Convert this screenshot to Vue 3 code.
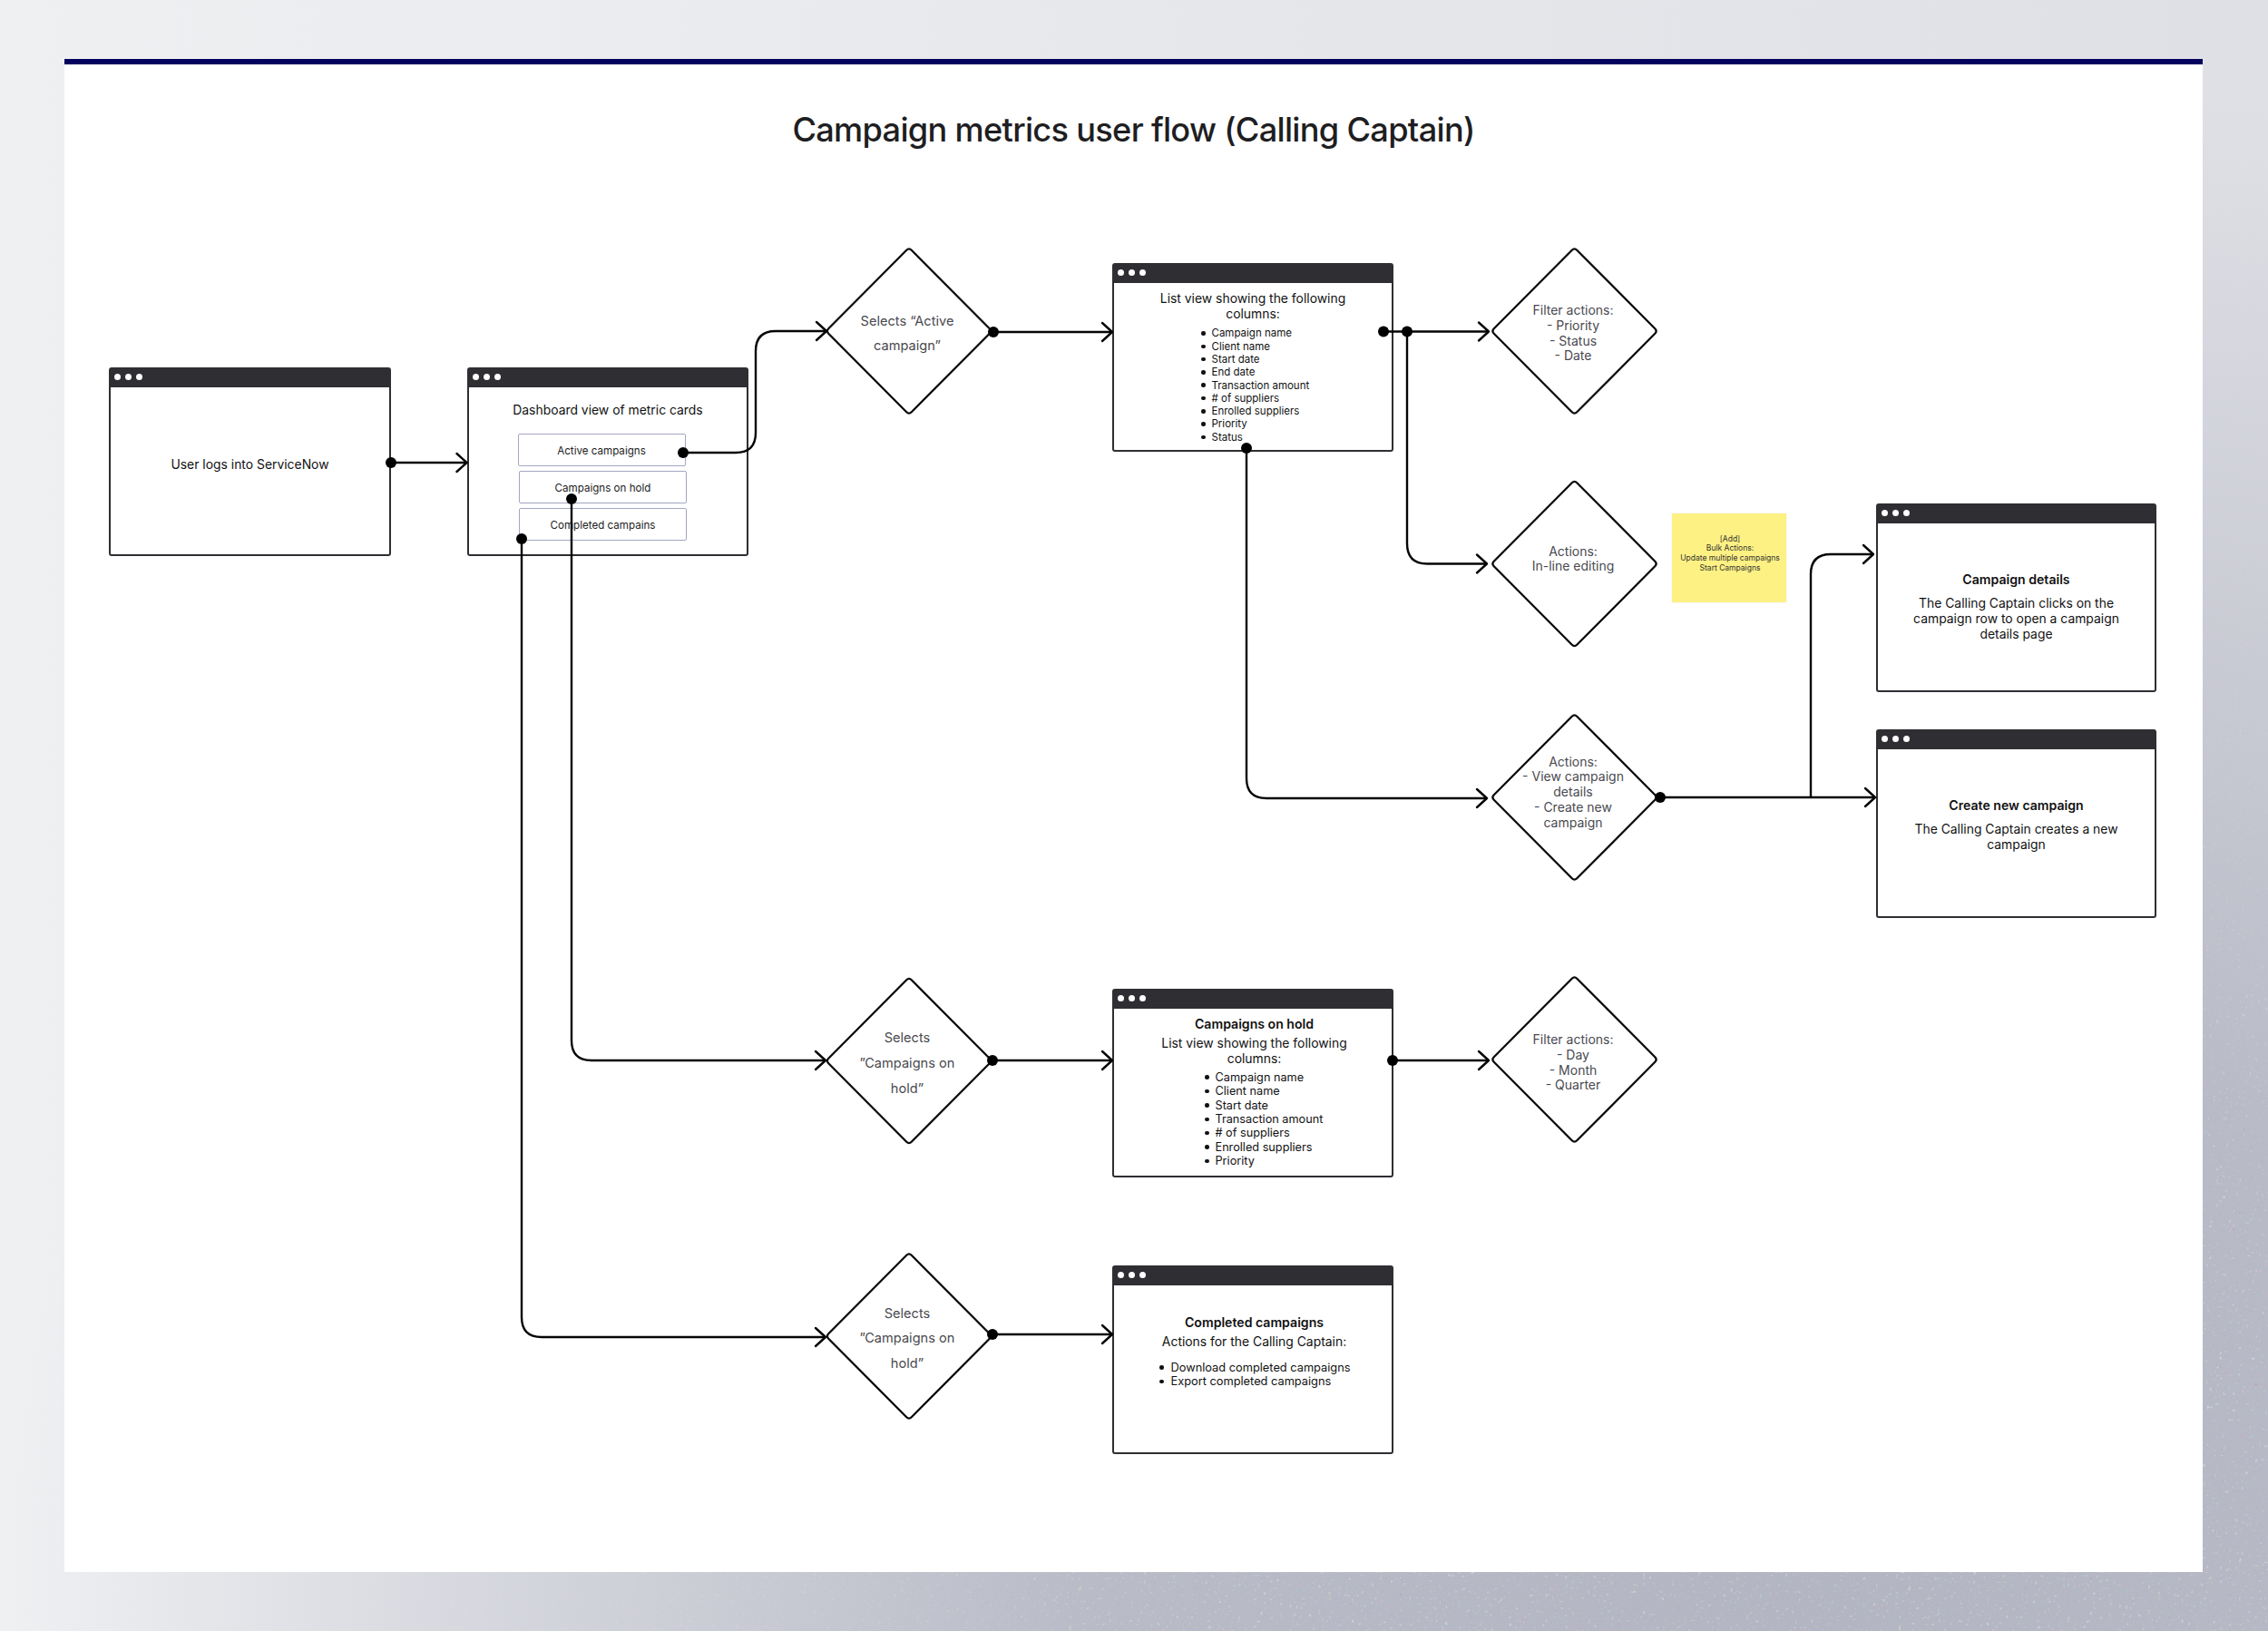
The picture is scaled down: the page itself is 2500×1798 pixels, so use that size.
<script setup>
const OX = 71
const OY = 65

const dots = [[431,510],[753,499],[630,550],[575,594],[1095,366],[1525,365.5],[1551,365.5],[1374,494],[1830,879],[1094,1169],[1535,1169],[1094,1471]]

const lines = [
  { d: 'M431 510H514', tip: [514.5,510] },
  { d: 'M753 499H811Q833 499 833 477V387Q833 365 855 365H911', tip: [911,365] },
  { d: 'M1094 366H1226', tip: [1226,366] },
  { d: 'M1525 365.5H1641', tip: [1641,365.5] },
  { d: 'M1551 365.5V599Q1551 621.5 1573 621.5H1639', tip: [1639,621.5] },
  { d: 'M1374 494V858Q1374 880 1396 880H1639', tip: [1639,880] },
  { d: 'M1830 879H2067', tip: [2067,879] },
  { d: 'M1996 879V633Q1996 611 2018 611H2065', tip: [2065,611] },
  { d: 'M630 550V1147Q630 1169 652 1169H910', tip: [910,1169] },
  { d: 'M575 594V1452Q575 1474 597 1474H910', tip: [910,1474] },
  { d: 'M1094 1169H1226', tip: [1226,1169] },
  { d: 'M1535 1169H1641', tip: [1641,1169] },
  { d: 'M1094 1471H1226', tip: [1226,1471] },
]

function diamondPath(cx, cy, hw, hh) {
  const r = 0.03
  const pts = [[cx,cy-hh],[cx+hw,cy],[cx,cy+hh],[cx-hw,cy]]
  let d = ''
  pts.forEach((p, i) => {
    const prev = pts[(i + 3) % 4]
    const next = pts[(i + 1) % 4]
    const a = [p[0] + (prev[0]-p[0])*r, p[1] + (prev[1]-p[1])*r]
    const b = [p[0] + (next[0]-p[0])*r, p[1] + (next[1]-p[1])*r]
    d += `${i ? 'L' : 'M'}${a[0]} ${a[1]}Q${p[0]} ${p[1]} ${b[0]} ${b[1]}`
  })
  return d + 'Z'
}

const diamonds = [
  { cx:1002, cy:365, lines:['Selects “Active','campaign”'], tx:1000, ty:354, lh:27.7, wide:true },
  { cx:1735.5, cy:365, lines:['Filter actions:','- Priority','- Status','- Date'], tx:1734, ty:342, lh:16.7 },
  { cx:1735.5, cy:621.5, lines:['Actions:','In-line editing'], tx:1734, ty:607.5, lh:16.9 },
  { cx:1735.5, cy:879, lines:['Actions:','- View campaign','details','- Create new','campaign'], tx:1734, ty:839.6, lh:16.8 },
  { cx:1002, cy:1169.5, lines:['Selects','”Campaigns on','hold”'], tx:1000, ty:1144.4, lh:27.9, wide:true },
  { cx:1735.5, cy:1168, lines:['Filter actions:','- Day','- Month','- Quarter'], tx:1734, ty:1146, lh:16.7 },
  { cx:1002, cy:1473, lines:['Selects','”Campaigns on','hold”'], tx:1000, ty:1448, lh:27.9, wide:true },
]

const pageW = 2500
const pageH = 1798

function winStyle(x, y, w, h) {
  return { left: `${x-OX}px`, top: `${y-OY}px`, width: `${w}px`, height: `${h}px` }
}
function labelStyle(d) {
  return { left: `${d.tx-OX-100}px`, top: `${d.ty-OY-d.lh/2}px`, lineHeight: `${d.lh}px` }
}
</script>

<template>
  <div class="page">
    <svg class="grain" width="2500" height="1798">
      <filter id="speckle" x="0" y="0" width="100%" height="100%">
        <feTurbulence type="fractalNoise" baseFrequency="0.28" numOctaves="2" seed="7" />
        <feColorMatrix type="matrix" values="4 0 0 0 -1.5  0 4 0 0 -1.5  0 0 4 0 -1.5  1.8 1.8 1.8 0 -3.0" />
      </filter>
      <rect width="2500" height="1798" filter="url(#speckle)" />
    </svg>

    <main class="card">
      <h1 class="title">Campaign metrics user flow (Calling Captain)</h1>

      <section class="win" :style="winStyle(120,405,311,208)">
        <div class="bar"><i></i><i></i><i></i></div>
        <div class="body b1"><p class="t">User logs into ServiceNow</p></div>
      </section>

      <section class="win" :style="winStyle(515,405,310,208)">
        <div class="bar"><i></i><i></i><i></i></div>
        <div class="body b2">
          <p class="t">Dashboard view of metric cards</p>
          <div class="btns">
            <div class="btn first">Active campaigns</div>
            <div class="btn">Campaigns on hold</div>
            <div class="btn">Completed campains</div>
          </div>
        </div>
      </section>

      <section class="win" :style="winStyle(1226,290,310,208)">
        <div class="bar"><i></i><i></i><i></i></div>
        <div class="body b3">
          <p class="t">List view showing the following<br>columns:</p>
          <ul class="list l3">
            <li>Campaign name</li><li>Client name</li><li>Start date</li><li>End date</li><li>Transaction amount</li><li># of suppliers</li><li>Enrolled suppliers</li><li>Priority</li><li>Status</li>
          </ul>
        </div>
      </section>

      <section class="win" :style="winStyle(2068,555,309,208)">
        <div class="bar"><i></i><i></i><i></i></div>
        <div class="body b5">
          <p class="t strong">Campaign details</p>
          <p class="t para">The Calling Captain clicks on the<br>campaign row to open a campaign<br>details page</p>
        </div>
      </section>

      <section class="win" :style="winStyle(2068,804,309,208)">
        <div class="bar"><i></i><i></i><i></i></div>
        <div class="body b5">
          <p class="t strong">Create new campaign</p>
          <p class="t para">The Calling Captain creates a new<br>campaign</p>
        </div>
      </section>

      <section class="win" :style="winStyle(1226,1090,310,208)">
        <div class="bar"><i></i><i></i><i></i></div>
        <div class="body b7">
          <p class="t strong">Campaigns on hold</p>
          <p class="t sub">List view showing the following<br>columns:</p>
          <ul class="list l7">
            <li>Campaign name</li><li>Client name</li><li>Start date</li><li>Transaction amount</li><li># of suppliers</li><li>Enrolled suppliers</li><li>Priority</li>
          </ul>
        </div>
      </section>

      <section class="win" :style="winStyle(1226,1395,310,208)">
        <div class="bar"><i></i><i></i><i></i></div>
        <div class="body b8">
          <p class="t strong">Completed campaigns</p>
          <p class="t sub">Actions for the Calling Captain:</p>
          <ul class="list l8">
            <li>Download completed campaigns</li><li>Export completed campaigns</li>
          </ul>
        </div>
      </section>

      <aside class="sticky" :style="winStyle(1843,566,126,98)">
        [Add]<br>Bulk Actions:<br>Update multiple campaigns<br>Start Campaigns
      </aside>

      <svg class="wires" :viewBox="`${OX} ${OY} ${pageW-2*OX} ${pageH}`" :width="pageW-2*OX" :height="pageH" fill="none">
        <path v-for="(d,i) in diamonds" :key="'d'+i" :d="diamondPath(d.cx,d.cy,91.5,92)" fill="#fff" stroke="#0b0b0e" stroke-width="2.3" stroke-linejoin="round" />
        <g v-for="(l,i) in lines" :key="'l'+i" stroke="#050507" stroke-width="2.4">
          <path :d="l.d" />
          <path :d="`M${l.tip[0]-11} ${l.tip[1]-10}L${l.tip[0]} ${l.tip[1]}L${l.tip[0]-11} ${l.tip[1]+10}`" stroke-linecap="round" stroke-linejoin="round" />
        </g>
        <circle v-for="(p,i) in dots" :key="'c'+i" :cx="p[0]" :cy="p[1]" r="6" fill="#000" />
      </svg>

      <template v-for="(d,i) in diamonds" :key="'t'+i">
        <div class="dlabel" :class="{ wide: d.wide }" :style="labelStyle(d)">
          <div v-for="(s,j) in d.lines" :key="j">{{ s }}</div>
        </div>
      </template>
    </main>
  </div>
</template>

<style>
html, body { margin: 0; padding: 0; }
</style>

<style scoped>
.page {
  position: relative;
  width: 2500px;
  height: 1798px;
  box-sizing: border-box;
  padding: 64.5px 72px 65px 71px;
  font-family: Inter, "Liberation Sans", sans-serif;
  background:
    radial-gradient(ellipse 1900px 1650px at 2000px 1798px,
      rgb(179,181,194) 0%,
      rgba(180,182,195,.9) 42%,
      rgba(180,182,195,.47) 72%,
      rgba(180,182,195,.2) 90%,
      rgba(180,182,195,0) 105%),
    linear-gradient(to right, #eff0f2, #dfe0e5);
  overflow: hidden;
}
.grain {
  position: absolute;
  left: 0;
  top: 0;
  opacity: .4;
  -webkit-mask-image: radial-gradient(ellipse 1900px 1500px at 2000px 1798px, #000 30%, transparent 90%);
  mask-image: radial-gradient(ellipse 1900px 1500px at 2000px 1798px, #000 30%, transparent 90%);
}
.card {
  position: relative;
  height: 1668px;
  background: #fff;
  border-top: 6px solid #03035f;
  box-sizing: border-box;
}
.title {
  margin: 0;
  padding-top: 50px;
  text-align: center;
  font-size: 36.2px;
  font-weight: 550;
  line-height: 44px;
  color: #1e1e22;
  letter-spacing: -0.7px;
}
.win {
  position: absolute;
  box-sizing: border-box;
  border: 2px solid #2e2e33;
  border-radius: 3px;
  background: #fff;
  display: flex;
  flex-direction: column;
  margin-top: -6px;
}
.bar {
  flex: none;
  box-sizing: border-box;
  height: 20px;
  background: #2e2e33;
  display: flex;
  align-items: center;
  gap: 5px;
  padding: 0 0 2px 4px;
}
.bar i {
  width: 7px;
  height: 7px;
  border-radius: 50%;
  background: #fff;
}
.body {
  flex: 1;
  display: flex;
  flex-direction: column;
  color: #111;
}
.t {
  margin: 0;
  font-size: 13.9px;
  line-height: 16.7px;
  text-align: center;
}
.strong { font-weight: 600; font-size: 14.1px; }
.para { margin-top: 10px; }
.sub { margin-top: 5px; }
.b1 { padding-top: 77px; }
.b2 { padding-top: 17px; }
.b3 { padding-top: 9px; }
.b3 .t { line-height: 17.2px; }
.b5 { padding-top: 54px; }
.b7 { padding-top: 9px; }
.b8 { padding-top: 33px; }
.b7 .t, .b8 .t { padding-left: 3px; }
.btns {
  display: flex;
  flex-direction: column;
  gap: 5px;
  margin: 18px 0 0 55px;
}
.btn {
  box-sizing: border-box;
  width: 185px;
  height: 36px;
  border: 1.5px solid #a3a7c2;
  border-radius: 2px;
  font-size: 11.6px;
  line-height: 36.5px;
  text-align: center;
  color: #222;
}
.btn.first { margin-left: -1.5px; }
.list {
  margin: 0;
  padding: 0;
  list-style: none;
  font-size: 11.5px;
  color: #111;
}
.list li {
  display: flex;
  align-items: center;
  gap: 7px;
}
.list li::before {
  content: "";
  flex: none;
  width: 4.5px;
  height: 4.5px;
  border-radius: 50%;
  background: #111;
}
.l3 { margin: 5.5px 0 0 96px; line-height: 14.3px; }
.l7 { margin: 4px 0 0 100px; line-height: 15.47px; font-size: 12.7px; }
.l8 { margin: 12px 0 0 50px; line-height: 15.4px; font-size: 12.8px; }
.l8 li { gap: 8px; }
.sticky {
  position: absolute;
  box-sizing: border-box;
  padding: 23px 0 0 2px;
  margin-top: -6px;
  background: #fdf183;
  color: #333;
  font-size: 8.5px;
  line-height: 10.7px;
  text-align: center;
  box-shadow: 0 0 2px rgba(0,0,0,.08);
}
.wires {
  position: absolute;
  left: 0;
  top: -6px;
  pointer-events: none;
}
.dlabel {
  position: absolute;
  width: 200px;
  margin-top: -5px;
  text-align: center;
  font-size: 14px;
  color: #4a4a50;
}
.dlabel.wide { font-size: 14.6px; }
</style>
